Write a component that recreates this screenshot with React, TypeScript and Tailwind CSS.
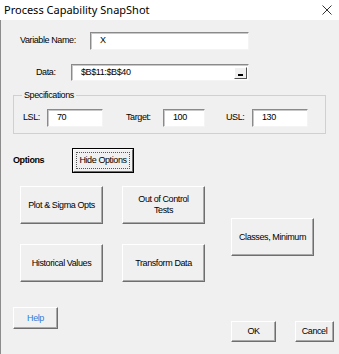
import React from "react";

const raised =
  "border border-t-white border-l-white border-r-[#6e6e6e] border-b-[#6e6e6e] shadow-[inset_-1px_-1px_0_#a9a9a9] bg-[#f0f0f0]";
const sunken =
  "bg-white border border-t-[#8a8a8a] border-l-[#8a8a8a] border-r-[#f4f4f4] border-b-[#f4f4f4] shadow-[inset_1px_1px_0_#c8c8c8]";

function Btn({ w, h, children, className = "" }: { w: string; h: string; children: React.ReactNode; className?: string }) {
  return (
    <div className={`${raised} ${w} ${h} flex items-center justify-center text-center leading-[11px] ${className}`}>
      {children}
    </div>
  );
}

function Field({ w, h = "h-[18px]", value }: { w: string; h?: string; value: string }) {
  return (
    <div className={`${sunken} ${w} ${h} flex items-center pl-[9px]`}>
      <span>{value}</span>
    </div>
  );
}

export default function App() {
  return (
    <div
      className="w-[339px] h-[354px] overflow-hidden text-black text-[9px] tracking-[-0.4px]"
      style={{ fontFamily: '"Liberation Sans", Arial, sans-serif' }}
    >
      {/* Title bar */}
      <div className="h-[20px] bg-white flex items-center justify-between pl-[4px] pr-[7px]">
        <span className="text-[11px] tracking-normal" style={{ fontFamily: '"Noto Sans", sans-serif' }}>
          Process Capability SnapShot
        </span>
        <svg width="10" height="10" viewBox="0 0 10 10">
          <path d="M0.5 0.5 L9.5 9.5 M9.5 0.5 L0.5 9.5" stroke="#333" strokeWidth="1" />
        </svg>
      </div>

      {/* Body */}
      <div className="h-[334px] bg-[#f0f0f0] border-l border-[#8c8c8c] flex flex-col">
        {/* Variable Name */}
        <div className="flex items-center mt-[12px] pl-[19px]">
          <div className="w-[70px]">Variable Name:</div>
          <Field w="w-[159px]" value="X" />
        </div>

        {/* Data */}
        <div className="flex items-center mt-[14px] pl-[35px]">
          <div className="w-[35px]">Data:</div>
          <div className={`${sunken} w-[178px] h-[17px] flex items-center pl-[9px]`}>
            <span>$B$11:$B$40</span>
            <div className="ml-auto mr-[1px] w-[13px] h-[12px] border border-t-white border-l-white border-r-[#505050] border-b-[#505050] bg-[#f0f0f0] flex items-end justify-center pb-[2px]">
              <div className="w-[5px] h-[2px] bg-black" />
            </div>
          </div>
        </div>

        {/* Specifications */}
        <fieldset className="ml-[12px] w-[313px] mt-[8px] border border-[#d0d0d0] pb-[6px]">
          <legend className="ml-[8px] px-[2px] leading-[12px]">Specifications</legend>
          <div className="flex items-center mt-[8px] pl-[9px]">
            <div className="w-[24px]">LSL:</div>
            <Field w="w-[56px]" value="70" />
            <div className="w-[37px] ml-[23px]">Target:</div>
            <Field w="w-[42px]" value="100" />
            <div className="w-[26px] ml-[21px]">USL:</div>
            <Field w="w-[56px]" value="130" />
          </div>
        </fieldset>

        {/* Options */}
        <div className="flex items-center mt-[14px] pl-[12px]">
          <div className="w-[59px] font-bold">Options</div>
          <div className="w-[62px] h-[25px] border border-black bg-[#f0f0f0]">
            <div className="w-full h-full border border-t-white border-l-white border-r-[#6e6e6e] border-b-[#6e6e6e] p-[2px]">
              <div className="w-full h-full border border-dotted border-[#555] flex items-center justify-center whitespace-nowrap">
                Hide Options
              </div>
            </div>
          </div>
        </div>

        {/* Option buttons */}
        <div className="flex mt-[13px] pl-[19px]">
          <div className="flex flex-col gap-[20px]">
            <Btn w="w-[83px]" h="h-[38px]">Plot &amp; Sigma Opts</Btn>
            <Btn w="w-[83px]" h="h-[38px]">Historical Values</Btn>
          </div>
          <div className="flex flex-col gap-[20px] ml-[19px]">
            <Btn w="w-[83px]" h="h-[38px]">
              Out of Control
              <br />
              Tests
            </Btn>
            <Btn w="w-[83px]" h="h-[38px]">Transform Data</Btn>
          </div>
          <div className="ml-[26px] pt-[32px]">
            <Btn w="w-[83px]" h="h-[38px]">Classes, Minimum</Btn>
          </div>
        </div>

        {/* Bottom buttons */}
        <div className="flex items-start mt-[25px] pl-[12px]">
          <Btn w="w-[45px]" h="h-[22px]" className="text-[#2a7fd8]">Help</Btn>
          <div className="flex ml-auto mr-[5px] mt-[14px] gap-[19px]">
            <Btn w="w-[45px]" h="h-[21px]">OK</Btn>
            <Btn w="w-[39px]" h="h-[21px]">Cancel</Btn>
          </div>
        </div>
      </div>
    </div>
  );
}
